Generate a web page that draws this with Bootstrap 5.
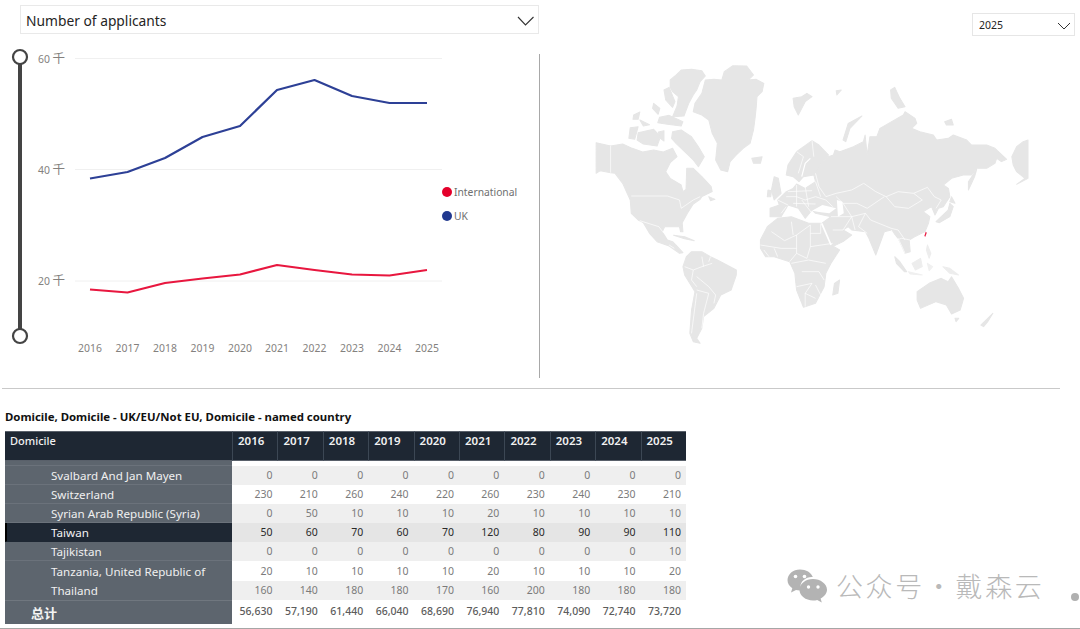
<!DOCTYPE html>
<html lang="en">
<head>
<meta charset="utf-8">
<title>Applicants dashboard</title>
<link href="https://cdn.jsdelivr.net/npm/bootstrap@5.3.0/dist/css/bootstrap.min.css" rel="stylesheet">
<style>
html,body{margin:0;background:#fff;width:1080px;height:629px;overflow:hidden;font-family:"Noto Sans","Open Sans",sans-serif}
.page-wrap{width:1080px;height:629px;position:relative}
.top-zone{height:388px}
.left-pane{width:540px}
.right-pane{width:540px}
.measure-drop{margin:5px 0 0 20px;width:519px;height:29px;border:1px solid #e9e9e9;padding:3px 3px 0 5px;font-size:13.8px;color:#252423}
.year-drop{margin:13px 5px 0 auto;width:103px;height:23px;border:1px solid #e6e6e6;padding:2px 3px 0 6px;font-size:10.5px;color:#252423}
.chart-svg,.map-svg{display:block}
.map-svg{filter:blur(.35px)}
.chart-svg text{font-family:"Noto Sans","Noto Sans CJK SC",sans-serif;font-size:10.4px;fill:#84817e}
.chart-svg text .kilo{font-size:12.5px}
.chart-svg .legend-txt{fill:#6f6f6f;font-size:10.3px}
.rule-mid{height:1px;width:1058px;margin-left:2px;background:#c9c9c9}
.tbl-title{font-size:11.4px;font-weight:700;color:#111;padding:20px 0 0 5px;height:42px;line-height:15px;font-family:"Noto Sans",sans-serif}
.tbl-wrap{padding-left:5px}
.pbi-grid{width:681px;table-layout:fixed;font-size:10.5px;line-height:17px;margin:0;border-collapse:separate;border-spacing:0}
.pbi-grid>:not(caption)>*>*{padding:0;background:transparent;border:0;box-shadow:none;color:#7b7b7b;text-align:right;padding-right:5px;white-space:nowrap;height:19.1px;vertical-align:middle}
.pbi-grid>thead>tr>th{background:#1e2733;color:#f1f1f1;font-size:11.5px;font-weight:600;height:30px;vertical-align:top;text-align:left;padding:0 0 0 5px;border-left:1px solid #3c4754;border-top:1px solid #59606a;border-bottom:1px solid #59606a;line-height:17px}
.pbi-grid>thead>tr>th:first-child{border-left:0;font-weight:500;font-size:11px}
.pbi-grid>tbody>tr>.row-name{background:#5d656e;color:#f0f0f0;text-align:left;padding:0 0 0 46px;border-bottom:1px solid #6b727b;font-size:11.6px}
.pbi-grid>tbody>tr.spacer>*{height:5px;line-height:4px;font-size:1px;padding:0}
.pbi-grid>tbody>tr.spacer>.row-name{padding:0;font-size:1px}
.pbi-grid>tbody>tr.shade>td:not(.row-name){background:#efefef}
.pbi-grid>tbody>tr.hi>td:not(.row-name){background:#e5e5e5;color:#2a2a2a}
.pbi-grid>tbody>tr.hi>.row-name{background:#1e2733;border-left:2px solid #000;padding-left:44px;border-bottom-color:#1e2733;color:#f2f2f2}
.pbi-grid>tbody>tr.noline>.row-name{border-bottom:0}
.pbi-grid>tbody>tr.sum>*{height:24px;color:#5c5c5c;font-weight:500;font-size:10.5px}
.pbi-grid>tbody>tr.sum>.row-name{padding-left:26px;font-family:"Noto Sans CJK SC",sans-serif;font-weight:700;font-size:13px;color:#f4f4f4;border-top:1px solid #70777f;border-bottom:0}
.rule-end{position:absolute;left:0;right:0;top:628px;height:1px;background:#a6a6a6}
.water-mark{position:absolute;left:787px;top:568px;color:#b9b9b9;font-family:"Noto Sans CJK SC",sans-serif;font-size:27px;line-height:36px;font-weight:300;letter-spacing:2.600px;word-spacing:-8px;white-space:nowrap}
.water-dot{position:absolute;left:1071px;top:593px;width:8px;height:8px;border-radius:50%;background:#b0b0b0}
</style>
</head>
<body>
<div class="page-wrap">
  <div class="top-zone d-flex">
    <div class="left-pane">
      <div class="measure-drop d-flex align-items-center justify-content-between">
        <span>Number of applicants</span>
        <svg width="18" height="10" viewBox="0 0 18 10"><path d="M1 1l7.500 8L16.500 1" fill="none" stroke="#333" stroke-width="1.100"/></svg>
      </div>
      <svg class="chart-svg" width="540" height="346" viewBox="0 34 540 346">
        <g stroke="#f0f0f0" stroke-width="1"><line x1="75" y1="58.500" x2="442" y2="58.500"/><line x1="75" y1="169.500" x2="442" y2="169.500"/><line x1="75" y1="281" x2="442" y2="281"/></g>
        <text x="38" y="63">60 <tspan class="kilo">千</tspan></text><text x="38" y="174">40 <tspan class="kilo">千</tspan></text><text x="38" y="285">20 <tspan class="kilo">千</tspan></text>
        <line x1="20" y1="58" x2="20" y2="336" stroke="#444" stroke-width="4"/>
        <circle cx="20" cy="57" r="7" fill="#fff" stroke="#444" stroke-width="2.200"/>
        <circle cx="20" cy="336" r="7" fill="#fff" stroke="#444" stroke-width="2.200"/>
        <polyline fill="none" stroke="#2d4096" stroke-width="2.200" stroke-linejoin="round" points="90,178.500 127.500,172 165,158 202.500,137 240,126 277,90 314.500,80 352,96 389.500,103 427,103"/>
        <polyline fill="none" stroke="#e8173f" stroke-width="2.200" stroke-linejoin="round" points="90,289.500 127.500,292.500 165,283 202.500,278.500 240,274.500 277,265 314.500,270 352,274.500 389.500,275.500 427,270"/>
        <circle cx="447" cy="192" r="5" fill="#e4002b"/><text class="legend-txt" x="454" y="196">International</text>
        <circle cx="447" cy="216" r="5" fill="#21398f"/><text class="legend-txt" x="454" y="220">UK</text>
        <g text-anchor="middle"><text x="90" y="352">2016</text><text x="127.500" y="352">2017</text><text x="165" y="352">2018</text><text x="202.500" y="352">2019</text><text x="240" y="352">2020</text><text x="277" y="352">2021</text><text x="314.500" y="352">2022</text><text x="352" y="352">2023</text><text x="389.500" y="352">2024</text><text x="427" y="352">2025</text></g>
        <line x1="539.500" y1="54" x2="539.500" y2="378" stroke="#a8a8a8" stroke-width="1"/>
      </svg>
    </div>
    <div class="right-pane">
      <div class="year-drop d-flex align-items-center justify-content-between">
        <span>2025</span>
        <svg width="14" height="8" viewBox="0 0 14 8"><path d="M1 1l6 6 6-6" fill="none" stroke="#333" stroke-width="1"/></svg>
      </div>
      <svg class="map-svg" width="540" height="344" viewBox="0 108 1568 1032" preserveAspectRatio="none">
        <g fill="#e6e6e6" stroke="#e6e6e6" stroke-width="3" stroke-linejoin="round">
          <path d="M480,240L505,238L528,240L535,215L560,197L600,198L620,225L605,240L628,238L650,250L645,275L630,290L628,320L625,350L620,390L610,430L590,445L570,465L552,485L545,515L525,510L510,480L515,430L500,400L490,360L470,345L445,335L450,310L470,280Z"/>
          <path d="M378,240L392,228L410,210L440,208L470,212L480,228L465,245L455,270L445,285L432,310L418,348L385,350L398,318L402,290L385,275L378,262Z"/>
          <path d="M360,270L375,262L392,305L385,322L365,300Z"/>
          <path d="M385,395L410,390L440,410L460,440L477,470L460,500L445,480L420,455L395,430L382,415Z"/>
          <path d="M285,398L330,388L350,410L340,438L300,432L282,420Z"/>
          <path d="M262,383L285,380L275,418L258,415Z"/>
          <path d="M272,345L290,336L285,358L270,358Z"/>
          <path d="M290,360L318,374L300,378Z"/>
          <path d="M330,310L348,325L343,343L327,325Z"/>
          <path d="M347,352L375,346L415,365L410,378L370,373L342,368Z"/>
          <path d="M344,396L360,392L360,423L347,413Z"/>
          <path d="M163,428L205,438L240,432L268,445L298,456L330,450L358,456L385,445L398,470L378,488L365,515L378,535L410,555L415,575L424,568L426,505L445,505L470,530L497,560L500,575L470,590L465,598L445,612L428,640L413,668L415,695L408,695L405,680L385,680L362,680L355,695L370,720L385,725L395,735L415,758L405,760L375,738L340,725L318,700L300,668L285,660L265,640L262,600L240,550L218,520L205,518L175,512L163,520Z"/>
          <path d="M490,590L508,598L495,602Z"/>
          <path d="M388,706L420,710L448,722L420,716Z"/>
          <path d="M425,770L440,755L470,755L495,770L515,780L570,810L570,825L555,870L525,885L505,925L475,950L470,985L455,1015L465,1030L445,1025L435,1000L440,930L450,875L420,825L415,800Z"/>
          <path d="M640,720L660,680L690,655L730,650L780,670L815,670L845,735L870,750L845,790L830,820L825,860L800,910L765,922L745,870L740,820L725,785L680,770L655,770L640,745Z"/>
          <path d="M850,885L855,850L870,840L865,880Z"/>
          <path d="M668,625L695,615L690,600L715,575L735,565L745,552L770,565L800,545L795,525L765,530L752,545L735,530L715,525L720,495L745,455L790,422L810,435L838,465L818,488L805,510L822,485L837,470L852,465L857,450L871,455L910,440L939,425L944,405L950,465L958,410L978,410L987,385L1021,365L1055,345L1060,335L1089,355L1094,370L1079,385L1103,395L1142,405L1152,420L1186,415L1200,405L1239,420L1253,435L1297,435L1321,445L1355,478L1340,485L1326,475L1321,490L1297,505L1268,505L1253,525L1229,525L1195,535L1171,555L1186,565L1190,590L1171,620L1157,625L1147,645L1137,620L1113,635L1132,650L1128,670L1118,695L1085,712L1072,720L1075,755L1060,760L1040,715L1020,690L1000,695L975,765L955,715L945,695L905,690L895,680L880,690L905,705L880,725L845,742L818,670L845,650L800,640L790,630L770,655L750,625L720,615L715,625L700,650L668,650Z"/>
          <path d="M1244,570L1244,545L1268,508L1262,530Z"/>
          <path d="M1370,470L1384,440L1403,425L1417,420V535L1384,553L1408,535L1384,515L1374,495Z"/>
          <path d="M1095,875L1130,850L1165,835L1185,845L1195,830L1215,865L1230,895L1220,930L1195,942L1180,915L1150,905L1105,925L1095,900Z"/>
          <path d="M1205,955L1216,955L1208,965Z"/>
          <path d="M1280,975L1315,940L1300,965L1288,980Z"/>
          <path d="M1030,770L1045,785L1065,815L1058,815L1035,790Z"/>
          <path d="M1070,815L1110,825L1075,822Z" opacity=".6"/>
          <path d="M1080,790L1105,775L1110,800L1090,810Z" opacity=".7"/>
          <path d="M1125,790L1140,800L1130,812Z" opacity=".6"/>
          <path d="M1170,800L1190,805L1215,825L1190,820Z" opacity=".7"/>
          <path d="M1125,735L1135,760L1130,775L1122,750Z" opacity=".7"/>
          <path d="M1150,665L1185,630L1190,610L1200,620L1190,650L1160,668Z"/>
          <path d="M1195,590L1205,610L1190,605Z"/>
          <path d="M680,530L692,535L700,580L680,600L672,570Z"/>
          <path d="M662,570L672,572L670,590L660,590Z"/>
          <path d="M615,475L645,470L640,490L620,490Z"/>
          <path d="M735,295L760,290L775,280L790,290L770,305L750,345L738,320Z"/>
          <path d="M880,420L895,370L935,348L900,385L888,425Z"/>
          <path d="M860,272L875,270L862,285Z"/>
          <path d="M1018,270L1030,262L1045,295L1060,320L1040,325L1020,295Z"/>
          <path d="M1175,365L1195,358L1200,375L1180,375Z"/>
        </g>
        <g fill="#fff"><path d="M790,632L820,615L860,625L840,640L810,636Z"/><path d="M862,600L878,605L882,640L865,650Z"/></g>
        <g fill="none" stroke="#fff" stroke-width="2" stroke-linejoin="round">
          <path d="M205,438V518"/><path d="M265,588H370L405,600L410,625L445,600L465,590"/><path d="M290,662L320,672L345,680L360,700"/><path d="M375,735L390,745"/>
          <path d="M860,580L905,570L940,550L975,575L1005,590L1040,575L1085,580L1125,562L1145,590L1165,600L1150,625"/>
          <path d="M1005,590L1030,620L1070,625L1110,600L1085,580"/><path d="M860,590L880,610L920,610L950,625L1000,590"/><path d="M800,520L810,560L830,590L860,580"/>
          <path d="M760,530L770,490L785,475" stroke-width="3.500"/><path d="M745,455L765,470L750,520"/><path d="M790,422L795,470"/>
          <path d="M690,600L720,615"/><path d="M715,590H745L770,600L800,590L830,600L850,620"/><path d="M745,555V620"/><path d="M770,560L780,620"/><path d="M800,545L815,590"/><path d="M700,640L715,620"/><path d="M760,600L790,640"/><path d="M720,575L790,572"/><path d="M735,610L800,612"/>
          <path d="M845,650H905L945,640"/><path d="M880,610L905,650L915,690"/><path d="M945,640L925,680L950,700"/><path d="M850,690H880"/><path d="M905,650L880,690"/>
          <path d="M945,640L960,660L1020,685L1040,690L1060,720"/><path d="M1020,690L1035,720L1050,715L1075,720"/><path d="M1040,715L1060,760"/>
          <path d="M818,670L845,735" stroke-width="5"/><path d="M672,695L710,722L745,705L785,675"/><path d="M730,665L735,705"/><path d="M745,705V760L725,785"/><path d="M785,675V740"/><path d="M815,670V700H785"/><path d="M785,740L850,730"/><path d="M785,740L775,775L745,760"/><path d="M640,735L700,745H745"/><path d="M650,750L665,770"/><path d="M680,745L690,770"/><path d="M730,790L780,780L830,790"/><path d="M760,815H810L825,840"/><path d="M745,860L790,850L770,880L800,895"/><path d="M770,880V920"/><path d="M800,855L815,885"/>
          <path d="M420,800L445,810L440,840L455,860"/><path d="M445,810L470,800L500,790"/><path d="M470,770L475,800"/><path d="M495,770L490,785"/><path d="M455,830L490,860L510,885L505,910"/><path d="M455,880L440,1000"/><path d="M455,870L490,880L475,940L470,985"/>
        </g>
        <path d="M1116,708L1120,695L1123,698L1119,710Z" fill="#e8173f"/>
      </svg>
    </div>
  </div>
  <div class="rule-mid"></div>
  <div class="tbl-title">Domicile, Domicile - UK/EU/Not EU, Domicile - named country</div>
  <div class="tbl-wrap">
    <table class="table table-borderless pbi-grid">
      <colgroup><col style="width:227px"><col span="10" style="width:45.4px"></colgroup>
      <thead><tr><th>Domicile</th><th>2016</th><th>2017</th><th>2018</th><th>2019</th><th>2020</th><th>2021</th><th>2022</th><th>2023</th><th>2024</th><th>2025</th></tr></thead>
      <tbody>
        <tr class="spacer"><td class="row-name"></td><td colspan="10"></td></tr>
        <tr class="shade"><td class="row-name">Svalbard And Jan Mayen</td><td>0</td><td>0</td><td>0</td><td>0</td><td>0</td><td>0</td><td>0</td><td>0</td><td>0</td><td>0</td></tr>
        <tr><td class="row-name">Switzerland</td><td>230</td><td>210</td><td>260</td><td>240</td><td>220</td><td>260</td><td>230</td><td>240</td><td>230</td><td>210</td></tr>
        <tr class="shade"><td class="row-name">Syrian Arab Republic (Syria)</td><td>0</td><td>50</td><td>10</td><td>10</td><td>10</td><td>20</td><td>10</td><td>10</td><td>10</td><td>10</td></tr>
        <tr class="hi"><td class="row-name">Taiwan</td><td>50</td><td>60</td><td>70</td><td>60</td><td>70</td><td>120</td><td>80</td><td>90</td><td>90</td><td>110</td></tr>
        <tr class="shade"><td class="row-name">Tajikistan</td><td>0</td><td>0</td><td>0</td><td>0</td><td>0</td><td>0</td><td>0</td><td>0</td><td>0</td><td>10</td></tr>
        <tr class="noline"><td class="row-name">Tanzania, United Republic of</td><td>20</td><td>10</td><td>10</td><td>10</td><td>10</td><td>20</td><td>10</td><td>10</td><td>10</td><td>20</td></tr>
        <tr class="shade noline"><td class="row-name">Thailand</td><td>160</td><td>140</td><td>180</td><td>180</td><td>170</td><td>160</td><td>200</td><td>180</td><td>180</td><td>180</td></tr>
        <tr class="sum"><td class="row-name">总计</td><td>56,630</td><td>57,190</td><td>61,440</td><td>66,040</td><td>68,690</td><td>76,940</td><td>77,810</td><td>74,090</td><td>72,740</td><td>73,720</td></tr>
      </tbody>
    </table>
  </div>
  <div class="rule-end"></div>
  <div class="water-mark d-flex align-items-center">
    <svg width="41" height="34" viewBox="0 0 41 34" class="me-2">
      <path d="M13 .5C6 .5.5 5.200.5 11c0 3.400 1.900 6.300 4.800 8.200L4 23.500l5-2.600c1.200.3 2.400.5 4 .5h1c-.4-1.100-.6-2.200-.6-3.400 0-5.600 5.200-10 11.400-10h1C24.300 3.600 19.100.5 13 .5z" fill="#b3b3b3"/>
      <path d="M26 10c-7.400 0-13.500 4.800-13.500 10.800S18.600 31.500 26 31.500c1.500 0 2.900-.2 4.200-.6l4.600 2.600-1.200-4C37.400 27.500 40 24.400 40 20.800 40 14.800 33.400 10 26 10z" fill="#b3b3b3"/>
      <circle cx="8.500" cy="7.500" r="1.800" fill="#fff"/><circle cx="17.500" cy="7.500" r="1.800" fill="#fff"/>
      <circle cx="21.500" cy="18" r="1.700" fill="#fff"/><circle cx="31" cy="18" r="1.700" fill="#fff"/>
    </svg>
    <span>公众号 · 戴森云</span>
  </div>
  <div class="water-dot"></div>
</div>
<script src="https://cdn.jsdelivr.net/npm/bootstrap@5.3.0/dist/js/bootstrap.bundle.min.js"></script>
</body>
</html>
